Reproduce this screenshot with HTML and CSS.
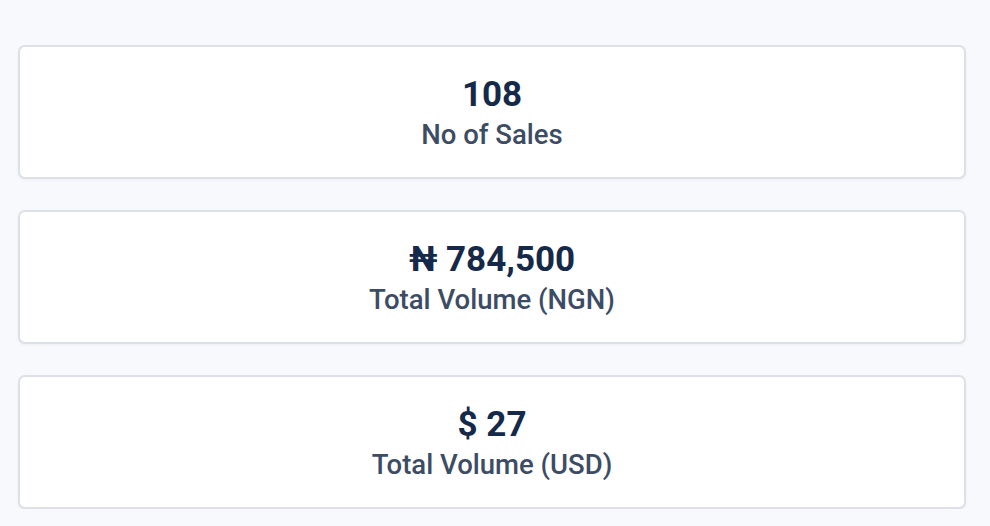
FILE: index.html
```html
<!DOCTYPE html>
<html lang="en">
<head>
    <meta charset="UTF-8">
    <meta name="viewport" content="width=device-width, initial-scale=1.0">
    <title>Sales Summary</title>
    <link rel="stylesheet" href="styles.css">
</head>
<body>
    <div class="stats-list">
        <div class="stat-card">
            <div class="stat-value">108</div>
            <div class="stat-label">No of Sales</div>
        </div>

        <div class="stat-card">
            <div class="stat-value">₦ 784,500</div>
            <div class="stat-label">Total Volume (NGN)</div>
        </div>

        <div class="stat-card">
            <div class="stat-value">$ 27</div>
            <div class="stat-label">Total Volume (USD)</div>
        </div>
    </div>
</body>
</html>
```

FILE: styles.css
```css
body {
    margin: 0;
    padding: 45px 24px 0 18px;
    font-family: Roboto, 'Liberation Sans', Arial, sans-serif;
    background-color: #f7f9fc;
}

.stats-list {
    display: flex;
    flex-direction: column;
    gap: 31px;
}

.stat-card {
    height: 134px;
    box-sizing: border-box;
    padding-top: 3px;
    background: #ffffff;
    border: 2px solid #dde1e7;
    border-radius: 7px;
    box-shadow: 0 1px 3px rgba(30,40,60,0.05);
    display: flex;
    flex-direction: column;
    justify-content: center;
    align-items: center;
    text-align: center;
}

.stat-value {
    font-size: 35px;
    font-weight: bold;
    color: #15294a;
    line-height: 40px;
}

.stat-label {
    font-size: 27.5px;
    font-weight: 500;
    color: #3d4c65;
    line-height: 34px;
    margin-top: 3px;
}
```
